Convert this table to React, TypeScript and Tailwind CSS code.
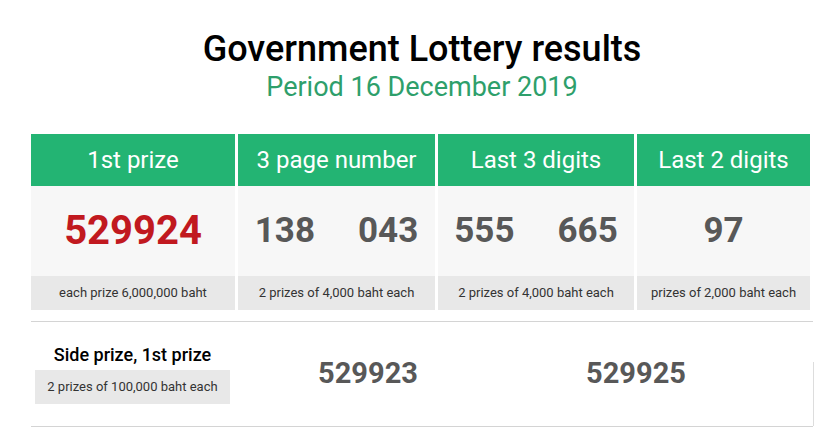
const prizes = [
  { title: "1st prize", numbers: ["529924"], note: "each prize 6,000,000 baht", red: true },
  { title: "3 page number", numbers: ["138", "043"], note: "2 prizes of 4,000 baht each" },
  { title: "Last 3 digits", numbers: ["555", "665"], note: "2 prizes of 4,000 baht each" },
  { title: "Last 2 digits", numbers: ["97"], note: "prizes of 2,000 baht each" },
];

export default function App() {
  return (
    <div className="min-h-screen bg-white font-['Roboto',sans-serif]">
      <main className="w-[813px] pl-[31px] pt-[29px]">
        <header className="text-center">
          <h1 className="text-[36px] leading-[40px] font-medium text-black">Government Lottery results</h1>
          <p className="mt-[3px] text-[27px] leading-[30px] text-[#2e9f6b]">Period 16 December 2019</p>
        </header>

        <section className="mt-[32px] grid grid-cols-[204px_197px_196px_173px] gap-x-[3px]">
          {prizes.map((p) => (
            <div key={p.title} className="flex flex-col">
              <div className="h-[52px] bg-[#23b473] flex items-center justify-center text-[24px] text-white">
                {p.title}
              </div>
              <div
                className={`h-[90px] bg-[#f7f7f7] flex items-center justify-center gap-[43px] font-bold ${
                  p.red ? "text-[40px] text-[#c1191f]" : "text-[35px] text-[#585858]"
                }`}
              >
                {p.numbers.map((n) => (
                  <span key={n}>{n}</span>
                ))}
              </div>
              <div className="h-[34px] bg-[#e8e8e8] flex items-center justify-center text-[13px] text-[#333333]">
                {p.note}
              </div>
            </div>
          ))}
        </section>

        <section className="mt-[11px] h-[106px] border-y border-[#d4d4d4] flex items-center">
          <div className="w-[203px] flex flex-col items-center">
            <h2 className="text-[18px] leading-[22px] font-medium text-black">Side prize, 1st prize</h2>
            <div className="mt-[4px] w-[195px] h-[34px] bg-[#e8e8e8] flex items-center justify-center text-[13px] text-[#333333]">
              2 prizes of 100,000 baht each
            </div>
          </div>
          <div className="w-[268px] text-center text-[29px] font-bold text-[#585858]">529923</div>
          <div className="w-[268px] text-center text-[29px] font-bold text-[#585858]">529925</div>
          <div className="ml-auto -mr-px self-end w-px h-[64px] bg-[#dddddd]" />
        </section>
      </main>
    </div>
  );
}
